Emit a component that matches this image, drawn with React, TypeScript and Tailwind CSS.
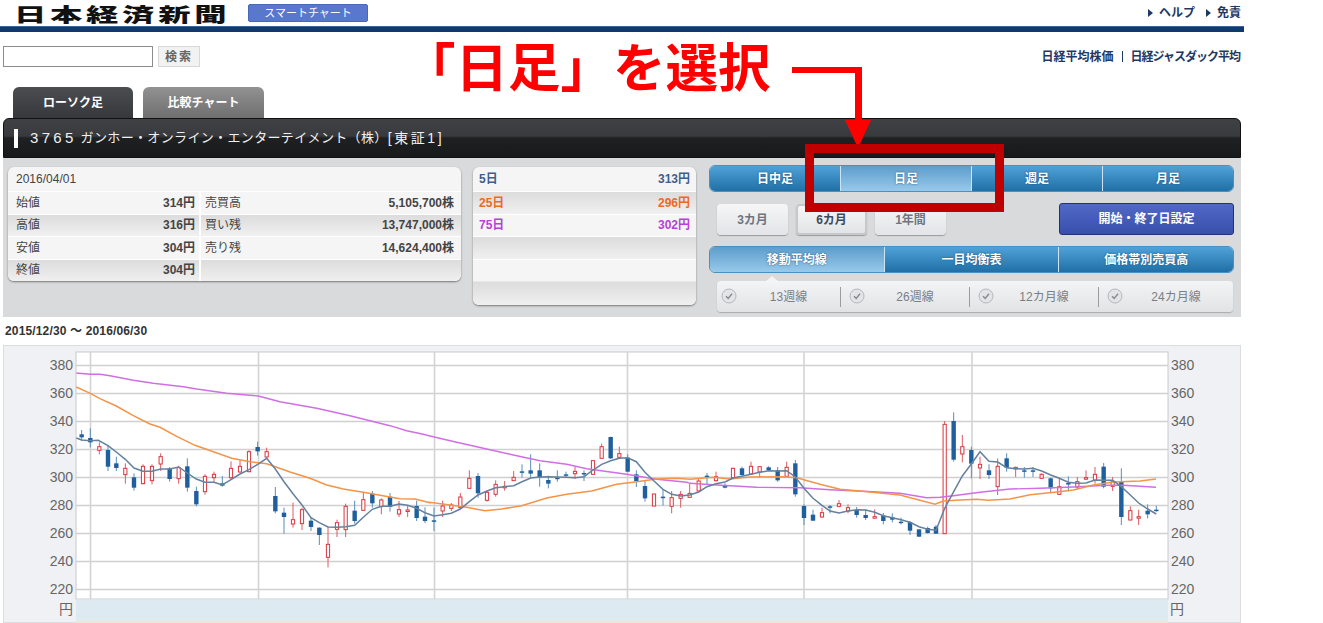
type Candle = [number, number, number, number, number, string];

const FONT = "font-['Liberation_Sans','Noto_Sans_CJK_JP',sans-serif]";

// candles measured in zoomed crops: x, high, low, body top, body bottom (3x px)
const left: Candle[] = [
  [245,255,288,268,277,"b"],[271,250,307,279,292,"b"],[298,292,328,305,316,"r"],[324,300,378,315,365,"b"],
  [349,335,378,355,369,"b"],[376,355,416,370,389,"r"],[402,385,437,397,428,"b"],[429,358,418,364,416,"r"],
  [456,358,418,364,407,"r"],[482,325,378,335,357,"r"],[509,366,410,370,402,"b"],[536,362,416,368,401,"r"],
  [562,340,440,364,428,"b"],[589,425,484,438,478,"b"],[615,388,449,394,440,"r"],[642,380,412,388,398,"r"],
  [667,393,425,415,422,"b"],[693,349,402,370,398,"r"],[720,346,383,364,381,"r"],[747,316,382,320,380,"r"],
  [773,290,332,306,319,"b"],[800,308,340,320,336,"r"],[826,426,505,453,499,"b"],[852,488,566,503,516,"b"],
  [879,473,548,524,537,"r"],[906,488,555,494,536,"r"],[933,516,558,527,546,"b"],[958,547,600,548,570,"b"],
  [984,545,667,598,637,"r"],[1011,524,576,533,553,"r"],[1037,476,576,484,554,"r"],[1064,467,536,497,528,"b"],
  [1090,443,498,464,496,"r"],[1117,438,488,446,475,"b"],[1144,460,508,465,485,"r"],[1170,444,500,455,486,"b"],
  [1197,468,516,494,507,"r"],[1223,482,516,495,497,"r"],[1250,467,528,483,519,"b"],[1275,487,534,515,528,"b"],
  [1302,488,558,526,528,"b"],
];
const middle: Candle[] = [
  [38,467,516,483,498,"r"],[64,474,498,480,490,"r"],[91,444,492,456,488,"r"],[118,376,430,400,430,"r"],
  [144,384,458,393,445,"b"],[171,438,470,442,466,"r"],[197,406,455,418,448,"r"],[224,408,437,424,427,"r"],
  [251,378,408,397,407,"r"],[276,358,398,379,381,"b"],[302,328,398,376,386,"b"],[329,355,425,376,397,"b"],
  [355,392,430,405,416,"b"],[382,376,410,398,401,"b"],[408,380,398,388,391,"b"],[435,366,402,379,386,"r"],
  [462,376,408,384,388,"b"],[489,347,390,347,388,"r"],[515,296,342,305,340,"r"],[542,275,342,276,340,"b"],
  [568,305,342,326,337,"r"],[593,328,382,338,380,"b"],[619,376,426,388,408,"b"],[645,408,470,423,460,"b"],
  [672,446,484,447,483,"r"],[699,432,482,455,457,"b"],[725,438,505,458,484,"r"],[752,438,488,448,460,"r"],
  [779,416,458,445,457,"r"],[806,400,440,408,438,"r"],[831,384,418,392,396,"b"],[858,380,410,395,407,"r"],
  [885,415,430,420,428,"b"],[909,368,400,370,398,"r"],[936,365,396,370,390,"b"],[963,350,390,364,387,"r"],
  [989,364,398,365,381,"r"],[1016,364,378,367,376,"b"],[1043,366,410,376,406,"b"],[1070,350,396,367,394,"r"],
  [1096,345,455,355,448,"b"],[1122,478,540,483,519,"b"],[1149,494,528,509,527,"b"],[1176,488,518,503,516,"r"],
  [1200,480,505,484,488,"b"],[1227,465,487,476,484,"r"],[1254,478,505,488,498,"r"],
];
const right: Candle[] = [
  [50,486,518,495,510,"b"],[77,494,525,510,519,"b"],[104,493,520,515,518,"r"],[130,504,538,512,528,"b"],
  [157,505,532,517,524,"b"],[183,518,538,530,534,"b"],[210,528,570,531,557,"b"],[237,553,576,553,575,"b"],
  [263,545,566,549,564,"b"],[288,540,567,545,566,"b"],[314,228,566,238,566,"r"],[341,202,350,228,344,"b"],
  [367,270,352,305,327,"r"],[394,305,400,315,356,"b"],[420,335,402,358,369,"r"],[447,358,402,376,390,"b"],
  [473,340,450,364,425,"r"],[500,325,380,340,368,"b"],[527,365,396,367,370,"r"],[553,366,398,376,380,"b"],
  [579,366,396,376,380,"b"],[605,385,402,388,400,"r"],[632,398,445,400,430,"b"],[658,398,450,425,448,"r"],
  [685,394,440,414,418,"b"],[712,396,432,410,426,"r"],[738,376,405,398,401,"r"],[765,366,416,388,406,"r"],
  [791,354,430,365,425,"b"],[818,396,438,410,424,"r"],[844,370,540,410,516,"b"],[871,484,526,497,525,"r"],
  [896,494,540,515,518,"r"],[923,478,520,497,508,"b"],[949,482,500,494,498,"b"],
];

const ma5 = [
  [[229,279],[245,285],[271,287],[295,286],[324,302],[349,321],[376,343],[402,369],[429,379],[456,379],[482,372],[509,372],[536,366],[562,384],[589,402],[615,412],[642,412],[667,420],[693,404],[720,387],[747,374],[773,358],[800,340],[826,372],[852,410],[879,446],[906,480],[933,518],[958,533],[984,546],[1011,547],[1037,545],[1064,541],[1090,517],[1117,493],[1144,484],[1170,484],[1197,477],[1223,481],[1250,490],[1275,503],[1302,513]],
  [[38,509],[64,505],[91,492],[118,470],[144,450],[171,438],[197,428],[224,425],[251,422],[276,410],[302,399],[329,396],[355,395],[382,396],[408,397],[435,398],[462,395],[489,375],[515,358],[542,347],[568,340],[593,338],[619,350],[645,382],[672,408],[699,433],[725,448],[752,453],[779,450],[806,441],[831,425],[858,416],[885,411],[909,399],[936,394],[963,388],[989,382],[1016,377],[1043,378],[1070,377],[1096,396],[1122,430],[1149,460],[1176,481],[1200,498],[1227,504],[1254,498]],
  [[50,494],[77,495],[104,502],[130,512],[157,518],[183,524],[210,532],[237,545],[263,553],[288,556],[314,490],[341,440],[367,393],[394,357],[420,320],[447,349],[473,351],[500,368],[527,371],[553,372],[579,370],[605,378],[632,390],[658,400],[685,412],[712,415],[738,414],[765,405],[791,406],[818,406],[844,425],[871,450],[896,474],[923,492],[949,507]],
];
const ma25 = [
  [[229,126],[271,145],[300,161],[349,183],[400,212],[450,237],[480,247],[530,274],[585,301],[640,320],[695,340],[750,350],[800,356],[830,367],[870,381],[930,400],[980,420],[1030,432],[1090,442],[1140,451],[1200,461],[1245,462],[1290,473]],
  [[0,472],[60,480],[110,487],[165,497],[215,492],[275,482],[350,459],[410,448],[485,438],[560,418],[620,410],[680,402],[740,400],[780,403],[850,397],[900,402],[960,396],[1060,395],[1100,398],[1170,418],[1230,433]],
  [[60,438],[120,444],[180,450],[285,478],[310,468],[360,465],[410,463],[445,466],[510,462],[570,449],[650,441],[700,435],[760,420],[820,411],[900,408],[948,402]],
];
const ma75 = [
  [[229,84],[270,88],[300,88],[330,92],[400,106],[460,115],[550,125],[590,132],[680,145],[775,153],[840,170],[950,190],[1050,212],[1170,242],[1220,257],[1270,268]],
  [[0,273],[80,292],[170,312],[250,330],[330,347],[410,358],[470,371],[590,388],[680,403],[770,412],[780,415],[860,420],[980,427],[1110,428],[1200,434]],
  [[100,440],[180,445],[260,458],[300,457],[340,452],[420,442],[510,432],[600,430],[700,426],[800,421],[850,421],[948,427]],
];

const offsets = [0, 430, 840];
const toPoints = (parts: number[][][]) =>
  parts
    .flatMap((part, i) => part.map(([x, y]) => `${(offsets[i] + x / 3).toFixed(1)},${(345 + y / 3).toFixed(1)}`))
    .join(" ");

const prices = [380, 360, 340, 320, 300, 280, 260, 240, 220];
const gridY = [365.5, 393.5, 421.5, 449.5, 477.5, 505.5, 533.5, 561.5, 589.5];
const gridX = [90.5, 258.5, 434.5, 627.5, 804, 972];

const Candles = ({ list, offset }: { list: Candle[]; offset: number }) => (
  <>
    {list.map(([zx, hi, lo, top, bot, c]) => {
      const x = offset + zx / 3;
      const up = c === "r";
      const y1 = 345 + top / 3;
      const h = Math.max((bot - top) / 3, 1.5);
      return (
        <g key={zx}>
          <line x1={x} x2={x} y1={345 + hi / 3} y2={345 + lo / 3} stroke={up ? "#dc5a60" : "#5b8dba"} strokeWidth="1" />
          {up ? (
            <rect x={x - 1.6} y={y1} width="3.2" height={h} fill="#fff" stroke="#d8363f" strokeWidth="1" />
          ) : (
            <rect x={x - 2.2} y={y1} width="4.4" height={h} fill="#1f5f9d" />
          )}
        </g>
      );
    })}
  </>
);

const Chart = () => (
  <svg viewBox="3 345 1238 278" className="block w-[1238px] h-[278px]">
    <rect x="76" y="352" width="1092" height="247" fill="#fff" stroke="#c9cacd" strokeWidth="1" />
    <rect x="76" y="599.5" width="1092" height="21" fill="#deeaf1" />
    <rect x="76" y="620.5" width="1092" height="2.5" fill="#e8e8dc" />
    {gridY.map((y) => (
      <line key={y} x1="76" x2="1168" y1={y} y2={y} stroke="#d0d0d0" strokeWidth="1.3" />
    ))}
    {gridX.map((x) => (
      <line key={x} x1={x} x2={x} y1="352" y2="599" stroke="#d4d4d4" strokeWidth="1.6" />
    ))}
    <Candles list={left} offset={0} />
    <Candles list={middle} offset={430} />
    <Candles list={right} offset={840} />
    <polyline points={toPoints(ma75)} fill="none" stroke="#cf6fe3" strokeWidth="1.4" />
    <polyline points={toPoints(ma25)} fill="none" stroke="#f39449" strokeWidth="1.5" />
    <polyline points={toPoints(ma5)} fill="none" stroke="#64819f" strokeWidth="1.5" />
    {prices.map((p, i) => (
      <g key={p} fontSize="14" fill="#666" fontFamily="'Liberation Sans',sans-serif">
        <text x="73" y={gridY[i] + 4.5} textAnchor="end">{p}</text>
        <text x="1171" y={gridY[i] + 4.5}>{p}</text>
      </g>
    ))}
    <text x="59" y="614" fontSize="14" fill="#666" fontFamily="'Noto Sans CJK JP',sans-serif">円</text>
    <text x="1170" y="614" fontSize="14" fill="#666" fontFamily="'Noto Sans CJK JP',sans-serif">円</text>
  </svg>
);

const lightRow = "bg-[#f5f5f5]";
const darkRow = "bg-gradient-to-b from-[#dcdcdc] to-[#f0f0f0]";

const PriceCard = () => {
  const rows = [
    ["始値", "314円", "売買高", "5,105,700株", lightRow],
    ["高値", "316円", "買い残", "13,747,000株", darkRow],
    ["安値", "304円", "売り残", "14,624,400株", lightRow],
    ["終値", "304円", "", "", darkRow],
  ];
  return (
    <div className="w-[453px] h-[114px] mt-[9px] ml-[5px] rounded-md overflow-hidden shadow-[0_1px_2px_#777] bg-[#f5f5f5] text-[12px] text-[#444]">
      <div className="h-[25px] flex items-center pl-[8px] border-b border-white">2016/04/01</div>
      {rows.map(([a, b, c, d, bg]) => (
        <div key={a} className={`h-[22.5px] flex items-center border-b border-white ${bg}`}>
          <div className="w-[193px] h-full flex items-center justify-between pl-[8px] pr-[4px] border-r-2 border-white">
            <span>{a}</span>
            <span className="font-bold">{b}</span>
          </div>
          <div className="flex-1 flex items-center justify-between pl-[4px] pr-[7px]">
            <span>{c}</span>
            <span className="font-bold">{d}</span>
          </div>
        </div>
      ))}
    </div>
  );
};

const AverageCard = () => (
  <div className="w-[223px] h-[138px] mt-[9px] ml-[12px] rounded-md overflow-hidden shadow-[0_1px_2px_#777] bg-[#f5f5f5] text-[12px] font-bold">
    <div className="h-[25px] flex items-center justify-between px-[6px] border-b border-white text-[#3f5f8a]"><span>5日</span><span>313円</span></div>
    <div className={`h-[22.5px] flex items-center justify-between px-[6px] border-b border-white text-[#ee6a1f] ${darkRow}`}><span>25日</span><span>296円</span></div>
    <div className={`h-[22.5px] flex items-center justify-between px-[6px] border-b border-white text-[#b93fd6] ${lightRow}`}><span>75日</span><span>302円</span></div>
    <div className={`h-[22.5px] border-b border-white ${darkRow}`} />
    <div className={`h-[22px] border-b border-[#e8e8e8] ${lightRow}`} />
    <div className={`h-[23.5px] ${darkRow}`} />
  </div>
);

const Segments = ({ items, active }: { items: string[]; active: number }) => (
  <div className="flex h-[27px] rounded-md overflow-hidden border border-[#4a90c0] text-[12px] font-bold text-white [text-shadow:0_0_2px_#1d4f78]">
    {items.map((t, i) => (
      <div
        key={t}
        className={`flex-1 flex items-center justify-center ${i > 0 ? "border-l border-[#cfe3f0]" : ""} ${i === active ? "bg-gradient-to-b from-[#5c9dcc] to-[#98c9ea]" : "bg-gradient-to-b from-[#4fa2d8] to-[#1f70a6]"}`}
      >
        {t}
      </div>
    ))}
  </div>
);

const Period = ({ label, selected }: { label: string; selected?: boolean }) => (
  <div className={`w-[71px] h-[31px] rounded-[4px] flex items-center justify-center text-[12px] font-bold bg-gradient-to-b from-[#f6f6f6] to-[#e2e4e7] shadow-[0_1px_1px_#999] ${selected ? "text-[#3c4a5c] border-2 border-[#c6c8ca]" : "text-[#6d7680]"}`}>
    {label}
  </div>
);

const Check = ({ label, cell }: { label: string; cell: string }) => (
  <div className={`${cell} flex items-center h-[20px] text-[12px] text-[#7a7f86]`}>
    <svg viewBox="0 0 16 16" className="w-[16px] h-[16px] shrink-0 -mt-[2px]">
      <circle cx="8" cy="8" r="7" fill="#e2e4e7" stroke="#b5b8bb" />
      <path d="M5 8.2 7.2 10.4 11 5.8" fill="none" stroke="#8a8d90" strokeWidth="1.5" />
    </svg>
    <span className="flex-1 text-center">{label}</span>
  </div>
);

const Arrow = () => <span className="inline-block w-0 h-0 border-y-[4px] border-y-transparent border-l-[5px] border-l-[#1f3864] mr-[6px]" />;

export default function App() {
  return (
    <div className={`relative w-[1323px] h-[623px] overflow-hidden bg-white ${FONT}`}>
      {/* header */}
      <div className="w-[1244px] h-[26px] flex items-center justify-between pl-[14px] pr-[3px]">
        <div className="flex items-center">
          <div className="w-[234px] h-[26px] pt-[1px] flex items-center">
            <span className="origin-left scale-x-[1.7] font-['Noto_Sans_CJK_JP',sans-serif] font-black text-[19px] leading-[24px] tracking-[2.2px] text-[#111] whitespace-nowrap">日本経済新聞</span>
          </div>
          <span className="w-[120px] h-[18px] flex items-center justify-center rounded-[2px] bg-[#5a77cf] border border-[#4a68b8] text-[11px] text-white">スマートチャート</span>
        </div>
        <div className="flex items-center gap-[11px] text-[12px] font-bold text-[#1f3864]">
          <span className="flex items-center"><Arrow />ヘルプ</span>
          <span className="flex items-center"><Arrow />免責</span>
        </div>
      </div>
      <div className="w-[1244px] h-[6px] bg-[#0d3a73] border-t border-[#3b6596]" />

      {/* search row */}
      <div className="w-[1241px] h-[55px] flex justify-between pl-[3px] pt-[14px]">
        <div className="flex gap-[5px]">
          <div className="w-[150px] h-[21px] border border-[#8c8c8c] bg-white" />
          <div className="w-[42px] h-[21px] flex items-center justify-center border border-[#d8d8d8] bg-[#f2f2f2] text-[12px] font-bold tracking-[2px] text-[#666]">検索</div>
        </div>
        <div className="flex items-center gap-[8px] h-[21px] mr-[1px] text-[12px] font-bold text-[#1f3864]">
          <span>日経平均株価</span>
          <span className="w-[1px] h-[11px] bg-[#1f3864]" />
          <span className="tracking-[-1px]">日経ジャスダック平均</span>
        </div>
      </div>

      {/* tabs */}
      <div className="flex gap-[10px] pl-[13px] h-[31px] text-[12px] font-bold text-white">
        <div className="w-[120px] rounded-t-md flex items-center justify-center bg-gradient-to-b from-[#4b4d51] to-[#36383b]">ローソク足</div>
        <div className="w-[121px] rounded-t-md flex items-center justify-center bg-gradient-to-b from-[#929292] to-[#6f6f6f]">比較チャート</div>
      </div>

      {/* title bar */}
      <div className="ml-[3px] w-[1238px] h-[40px] flex items-center rounded-t-md border border-[#111] bg-[linear-gradient(#3f4145_0%,#383a3d_45%,#1f2022_50%,#18191a_100%)] pl-[10px] text-[#f0f0f0] whitespace-nowrap">
        <span className="w-[4px] h-[19px] bg-white mr-[12px]" />
        <span className="text-[15px] tracking-[3.3px] mr-[4px]">3765</span>
        <span className="text-[13px] tracking-[0.35px]">ガンホー・オンライン・エンターテイメント（株）</span>
        <span className="text-[14px] tracking-[2.6px]">[東証1]</span>
      </div>

      {/* info panel */}
      <div className="ml-[3px] w-[1238px] h-[159px] bg-[#d9dadb] flex">
        <PriceCard />
        <AverageCard />
        <div className="w-[525px] ml-[13px] pt-[7px]">
          <Segments items={["日中足", "日足", "週足", "月足"]} active={1} />
          <div className="flex mt-[11px] items-start">
            <div className="flex gap-[8px] ml-[8px] mt-[1px] w-[342px]">
              <Period label="3カ月" />
              <Period label="6カ月" selected />
              <Period label="1年間" />
            </div>
            <div className="w-[175px] h-[32px] flex items-center justify-center rounded-[3px] border border-[#26307a] bg-gradient-to-b from-[#5168c6] to-[#3a4fac] text-[12px] font-bold text-white">開始・終了日設定</div>
          </div>
          <div className="mt-[11px]">
            <Segments items={["移動平均線", "一目均衡表", "価格帯別売買高"]} active={0} />
          </div>
          <div className="relative mt-[8px] ml-[8px] w-[516px] h-[31px] flex items-center rounded-[4px] bg-gradient-to-b from-[#f3f4f5] to-[#e1e3e6] shadow-[0_1px_1px_#aaa]">
            <span className="absolute -top-[5px] left-[49px] w-0 h-0 border-x-[6px] border-x-transparent border-b-[5px] border-b-[#f3f4f5]" />
            <Check label="13週線" cell="w-[124px] pl-[4px] border-r border-[#9a9c9f]" />
            <Check label="26週線" cell="w-[129px] pl-[8px] pr-[4px] border-r border-[#9a9c9f]" />
            <Check label="12カ月線" cell="w-[129px] pl-[8px] pr-[4px] border-r border-[#9a9c9f]" />
            <Check label="24カ月線" cell="w-[134px] pl-[8px] pr-[4px]" />
          </div>
        </div>
      </div>

      {/* chart */}
      <div className="h-[28px] flex items-center pl-[5px] text-[12px] font-bold tracking-[0.15px] text-[#333]">2015/12/30 ～ 2016/06/30</div>
      <div className="ml-[3px] w-[1238px] h-[278px] bg-[#f0f1f5] ring-1 ring-inset ring-[#dcdde0]">
        <Chart />
      </div>

      {/* red annotation on top of the page */}
      <div className="absolute left-[403px] top-[28px] font-['Noto_Sans_CJK_JP',sans-serif] font-bold text-[52.5px] leading-[72px] text-[#f00] whitespace-nowrap">「日足」を選択</div>
      <div className="absolute left-[792px] top-[67px] w-[70px] h-[6px] bg-[#f00]" />
      <div className="absolute left-[855px] top-[67px] w-[7px] h-[54px] bg-[#f00]" />
      <div className="absolute left-[845px] top-[120px] w-0 h-0 border-x-[13.5px] border-x-transparent border-t-[28px] border-t-[#f00]" />
      <div className="absolute left-[805px] top-[144px] w-[199px] h-[68px] border-[9px] border-[#c00000]" />
    </div>
  );
}
